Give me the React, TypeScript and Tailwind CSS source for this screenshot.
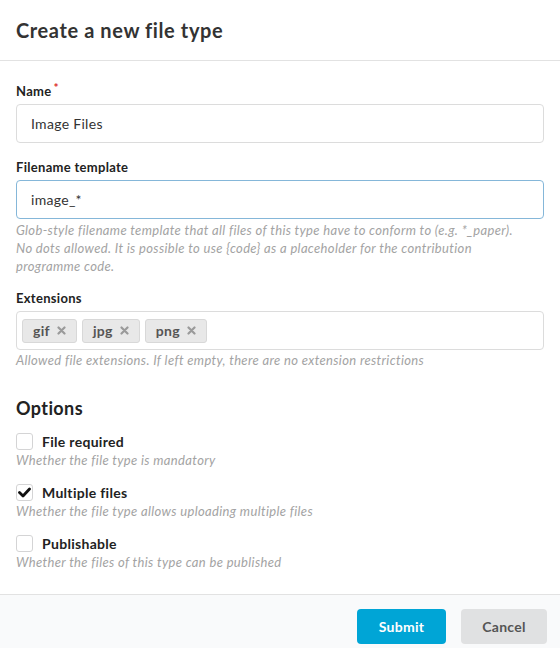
import React from "react";

const tags = ["gif", "jpg", "png"];

const options = [
  { label: "File required", help: "Whether the file type is mandatory", checked: false },
  { label: "Multiple files", help: "Whether the file type allows uploading multiple files", checked: true },
  { label: "Publishable", help: "Whether the files of this type can be published", checked: false },
];

const Check = ({ checked }: { checked: boolean }) => (
  <span className="w-[17px] h-[17px] rounded-[3px] border border-[#d4d4d5] bg-white flex items-center justify-center shrink-0">
    {checked && (
      <svg width="13" height="11" viewBox="0 0 13 11">
        <path d="M1.5 5.5 L5 9 L11.5 2" fill="none" stroke="#111" strokeWidth="2.8" strokeLinecap="round" strokeLinejoin="round" />
      </svg>
    )}
  </span>
);

const help = "text-[13px] italic leading-[18px] text-[#a3a3a3] tracking-[0.35px]";

export default function App() {
  return (
    <div className="w-[560px] h-[648px] bg-white text-[#222] overflow-hidden flex flex-col" style={{ fontFamily: "Lato, 'Open Sans', sans-serif" }}>
      {/* header */}
      <div className="h-[61px] px-4 flex items-center border-b border-[#e2e2e2]">
        <h1 className="text-[20px] font-bold text-[#333] tracking-[0.6px]">Create a new file type</h1>
      </div>

      {/* body */}
      <div className="flex-1 px-4 pt-[22px]">
        <div className="mb-[16px]">
          <label className="block text-[13px] font-bold leading-[17px] mb-[4px] tracking-[0.3px]">
            Name<span className="text-[#db2828] align-top ml-[2px] text-[12px] leading-[10px]">*</span>
          </label>
          <div className="h-[39px] border border-[#dcdcdc] rounded-[4px] px-[14px] flex items-center text-[14px] text-[#333] tracking-[0.3px]">
            Image Files
          </div>
        </div>

        <div className="mb-[15px]">
          <label className="block text-[13px] font-bold leading-[17px] mb-[4px] tracking-[0.3px]">Filename template</label>
          <div className="h-[39px] border border-[#85b7d9] rounded-[4px] px-[14px] flex items-center text-[14px] text-[#333] tracking-[0.3px]">
            image_*
          </div>
          <p className={`mt-[2px] ${help}`}>
            Glob-style filename template that all files of this type have to conform to (e.g. <code className="font-[inherit]">*_paper</code>).
            <br />
            No dots allowed. It is possible to use <code className="font-[inherit]">{"{code}"}</code> as a placeholder for the contribution
            <br />
            programme code.
          </p>
        </div>

        <div>
          <label className="block text-[13px] font-bold leading-[17px] mb-[4px] tracking-[0.3px]">Extensions</label>
          <div className="h-[39px] border border-[#dcdcdc] rounded-[4px] px-[5px] flex items-center gap-[5px]">
            {tags.map((t) => (
              <span key={t} className="h-[24px] px-[10px] rounded-[3px] bg-[#e8e8e8] border border-[#d8d8d8] flex items-center gap-[7px] text-[14px] font-bold text-[#555] tracking-[0.3px]">
                {t}
                <svg width="9" height="9" viewBox="0 0 9 9">
                  <path d="M1.5 1.5 L7.5 7.5 M7.5 1.5 L1.5 7.5" stroke="#9a9a9a" strokeWidth="2.2" strokeLinecap="round" />
                </svg>
              </span>
            ))}
          </div>
          <p className={`mt-[1px] ${help}`}>
            Allowed file extensions. If left empty, there are no extension restrictions
          </p>
        </div>

        <h2 className="mt-[28px] text-[18px] font-bold leading-[22px] text-[#222] tracking-[0.4px]">Options</h2>

        <div className="mt-[13px] flex flex-col gap-[14px]">
          {options.map((o) => (
            <div key={o.label}>
              <div className="flex items-center gap-[9px] h-[18px]">
                <Check checked={o.checked} />
                <span className="text-[14px] font-bold text-[#222] tracking-[0.3px]">{o.label}</span>
              </div>
              <p className={`mt-[1px] ${help}`}>{o.help}</p>
            </div>
          ))}
        </div>
      </div>

      {/* footer */}
      <div className="h-[54px] shrink-0 border-t border-[#e2e2e2] bg-[#f9fafb] flex justify-end items-start pt-[14px] pr-[13px] gap-[15px]">
        <button className="w-[89px] h-[35px] rounded-[4px] bg-[#00a5d6] text-white text-[14px] font-bold tracking-[0.3px]">Submit</button>
        <button className="w-[86px] h-[35px] rounded-[4px] bg-[#e0e1e2] text-[#555] text-[14px] font-bold tracking-[0.3px]">Cancel</button>
      </div>
    </div>
  );
}
